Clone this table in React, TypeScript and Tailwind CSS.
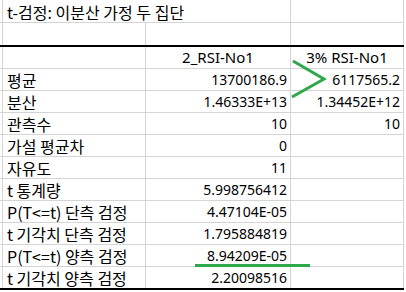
const ROWS: [string, string, string][] = [
  ['평균', '13700186.9', '6117565.2'],
  ['분산', '1.46333E+13', '1.34452E+12'],
  ['관측수', '10', '10'],
  ['가설 평균차', '0', ''],
  ['자유도', '11', ''],
  ['t 통계량', '5.998756412', ''],
  ['P(T<=t) 단측 검정', '4.47104E-05', ''],
  ['t 기각치 단측 검정', '1.795884819', ''],
  ['P(T<=t) 양측 검정', '8.94209E-05', ''],
  ['t 기각치 양측 검정', '2.20098516', ''],
]

const GRID = 'grid grid-cols-[2px_144px_145px_113px]'
const CELL = 'border-r border-[#d4d4d4] px-[4px] flex items-center whitespace-nowrap'
const KR = { fontFamily: '"Noto Sans CJK KR", sans-serif' }
const NUM = { fontFamily: '"Noto Sans", "Noto Sans CJK KR", sans-serif' }

export default function App() {
  return (
    <div className="relative w-[406px] h-[292px] bg-white text-black overflow-hidden leading-none">
      {/* 제목 행 */}
      <div className={`${GRID} h-[23px] border-b border-[#d4d4d4] w-[404px]`}>
        <div />
        <div className="border-l border-[#d4d4d4] px-[4px] pt-[1px] flex items-center whitespace-nowrap text-[16px]" style={KR}>
          t-검정: 이분산 가정 두 집단
        </div>
        <div className="border-r border-[#d4d4d4]" />
        <div className="border-r border-[#d4d4d4]" />
      </div>

      {/* 빈 행 */}
      <div className={`${GRID} h-[22px] w-[404px]`}>
        <div />
        <div className={`${CELL} border-l`} />
        <div className={CELL} />
        <div className={CELL} />
      </div>

      {/* 헤더 */}
      <div className={`${GRID} h-[24px] border-t-2 border-t-black border-b border-b-[#d4d4d4] w-[404px] text-[15px]`} style={NUM}>
        <div />
        <div className={`${CELL} border-l`} />
        <div className={`${CELL} justify-center`}>2_RSI-No1</div>
        <div className={`${CELL} justify-center`}>3% RSI-No1</div>
      </div>

      {ROWS.map(([label, a, b], i) => {
        const last = i === ROWS.length - 1
        return (
          <div
            key={label}
            className={`${GRID} w-[404px] ${last ? 'h-[23px] border-b-2 border-b-black' : 'h-[22px] border-b border-b-[#d4d4d4]'}`}
          >
            <div />
            <div className={`${CELL} border-l text-[16px] pt-[1px]`} style={KR}>{label}</div>
            <div className={`${CELL} justify-end text-[14px] pr-[3px]`} style={NUM}>{a}</div>
            <div className={`${CELL} justify-end text-[14px] pr-[3px]`} style={NUM}>{b}</div>
          </div>
        )
      })}

      {/* 초록 표시 */}
      <svg className="absolute left-0 top-0" width="406" height="292" viewBox="0 0 406 292">
        <polyline
          points="293,61 324,79 292,97"
          fill="none"
          stroke="#2ea84a"
          strokeWidth="3"
          strokeLinejoin="miter"
        />
      </svg>
      <div className="absolute left-[195px] top-[264px] w-[115px] h-[3px] bg-[#2ea84a]" />
    </div>
  )
}
